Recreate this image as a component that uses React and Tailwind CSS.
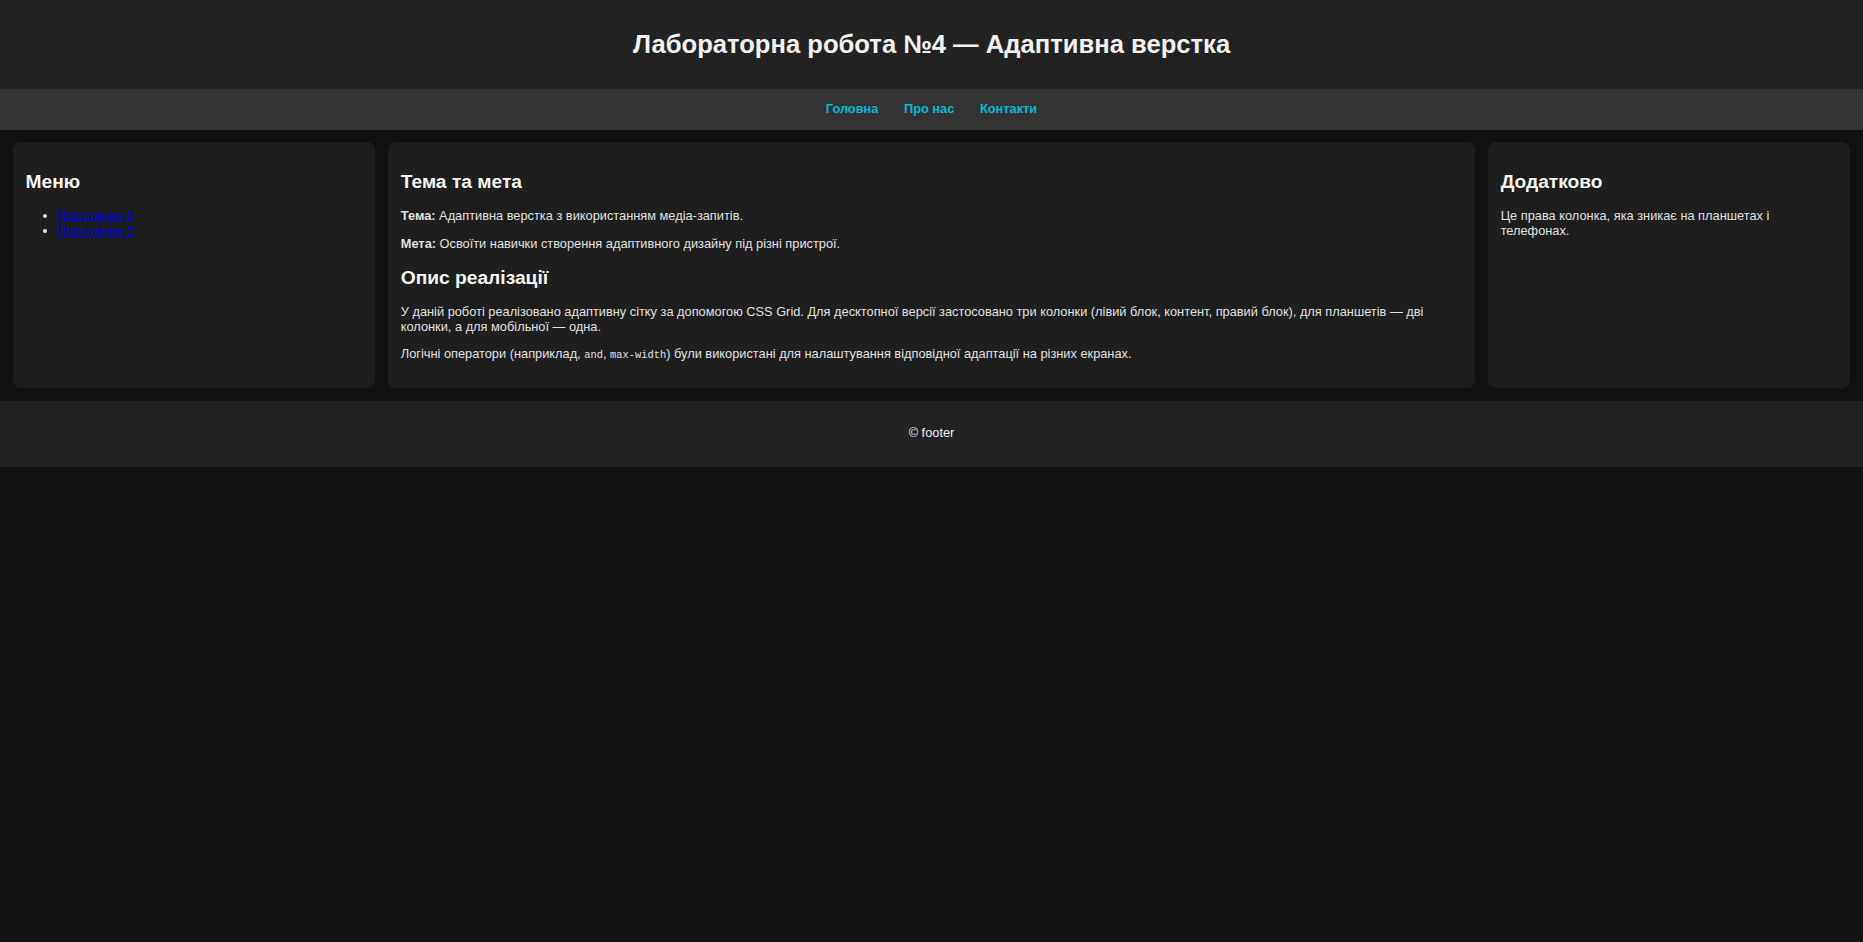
import React from "react";

const navLinks = ["Головна", "Про нас", "Контакти"];

const App = () => {
  return (
    <div
      className="min-h-screen bg-[#121212] text-[#e0e0e0] text-[12.8px] leading-[1.15]"
      style={{ fontFamily: '"Liberation Sans", Arial, sans-serif' }}
    >
      {/* Header */}
      <header className="bg-[#222222] px-[12.8px] py-[12.8px] text-center">
        <h1 className="my-[17.15px] text-[25.6px] font-bold leading-[1.15] text-[#f2f2f2]">
          Лабораторна робота №4 — Адаптивна верстка
        </h1>
      </header>

      {/* Nav */}
      <nav className="bg-[#333333] py-[12.8px] flex justify-center gap-[25.6px]">
        {navLinks.map((link) => (
          <a key={link} href="#" className="font-bold text-[#00bcd4] no-underline">
            {link}
          </a>
        ))}
      </nav>

      {/* Main grid */}
      <div className="grid grid-cols-[1fr_3fr_1fr] gap-[12.8px] p-[12.8px]">
        <aside className="bg-[#1e1e1e] rounded-[8px] p-[12.8px]">
          <h2 className="my-[15.9px] text-[19.2px] font-bold leading-[1.15] text-[#f5f5f5]">Меню</h2>
          <ul className="my-[12.8px] pl-[32px] list-disc">
            <li>
              <a href="#" className="text-[#0000ee] underline">Посилання 1</a>
            </li>
            <li>
              <a href="#" className="text-[#0000ee] underline">Посилання 2</a>
            </li>
          </ul>
        </aside>

        <main className="bg-[#1e1e1e] rounded-[8px] p-[12.8px]">
          <h2 className="my-[15.9px] text-[19.2px] font-bold leading-[1.15] text-[#f5f5f5]">Тема та мета</h2>
          <p className="my-[12.8px]">
            <strong className="font-bold">Тема:</strong> Адаптивна верстка з використанням медіа-запитів.
          </p>
          <p className="my-[12.8px]">
            <strong className="font-bold">Мета:</strong> Освоїти навички створення адаптивного дизайну під різні пристрої.
          </p>
          <h2 className="my-[15.9px] text-[19.2px] font-bold leading-[1.15] text-[#f5f5f5]">Опис реалізації</h2>
          <p className="my-[12.8px]">
            У даній роботі реалізовано адаптивну сітку за допомогою CSS Grid. Для десктопної версії застосовано три колонки (лівий блок, контент, правий блок), для планшетів — дві колонки, а для мобільної — одна.
          </p>
          <p className="my-[12.8px]">
            Логічні оператори (наприклад,{" "}
            <code className="text-[10.4px]" style={{ fontFamily: '"Liberation Mono", "Courier New", monospace' }}>and</code>,{" "}
            <code className="text-[10.4px]" style={{ fontFamily: '"Liberation Mono", "Courier New", monospace' }}>max-width</code>) були використані для налаштування відповідної адаптації на різних екранах.
          </p>
        </main>

        <aside className="bg-[#1e1e1e] rounded-[8px] p-[12.8px]">
          <h2 className="my-[15.9px] text-[19.2px] font-bold leading-[1.15] text-[#f5f5f5]">Додатково</h2>
          <p className="my-[12.8px]">Це права колонка, яка зникає на планшетах і телефонах.</p>
        </aside>
      </div>

      {/* Footer */}
      <footer className="bg-[#222222] py-[25.6px] text-center">
        <p className="text-[#eeeeee]">© footer</p>
      </footer>
    </div>
  );
};

export default App;
